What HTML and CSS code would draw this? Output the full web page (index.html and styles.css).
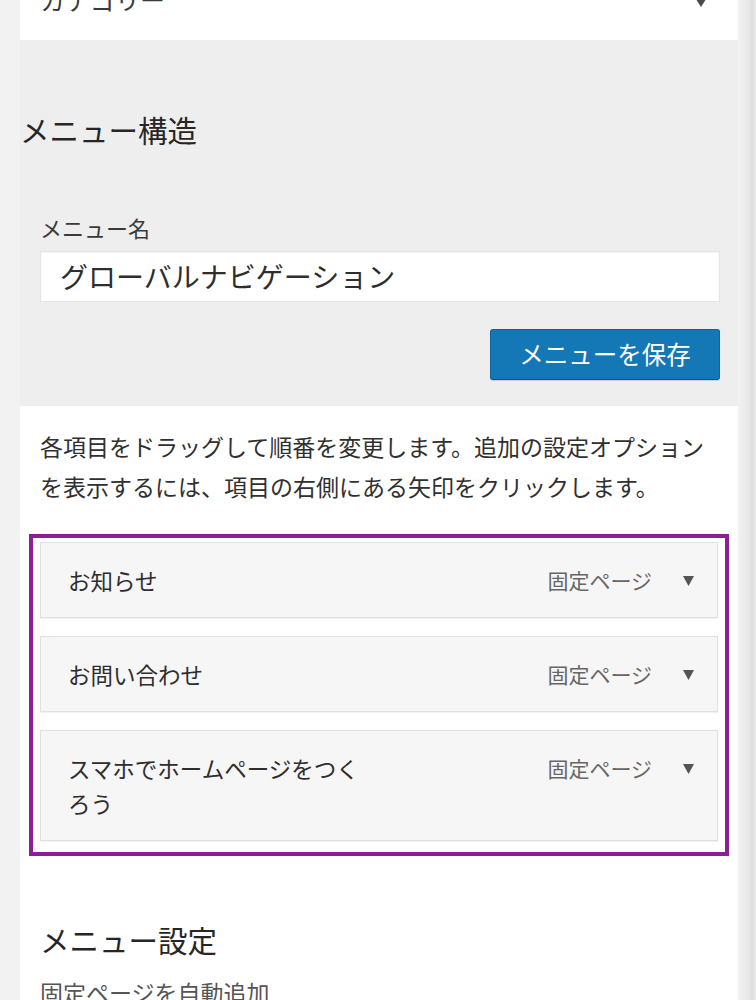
FILE: index.html
```html
<!DOCTYPE html>
<html lang="ja">
<head>
<meta charset="utf-8">
<title>メニュー構造</title>
<link rel="stylesheet" href="styles.css">
</head>
<body>
<div class="page">
  <div class="top-card">
    <span class="select-text">カテゴリー</span>
    <svg class="select-arrow" width="14" height="12" viewBox="0 0 14 12"><polygon points="0,0 14,0 7,11" fill="#4a4a4a"/></svg>
  </div>

  <div class="structure">
    <h2 class="section-title">メニュー構造</h2>
    <div class="name-block">
      <label class="name-label">メニュー名</label>
      <div class="name-input">グローバルナビゲーション</div>
      <div class="save-row">
        <button class="save-btn">メニューを保存</button>
      </div>
    </div>
  </div>

  <div class="panel">
    <p class="instructions">各項目をドラッグして順番を変更します。追加の設定オプションを表示するには、項目の右側にある矢印をクリックします。</p>

    <div class="highlight">
      <div class="item">
        <div class="item-title">お知らせ</div>
        <div class="item-controls"><span class="item-type">固定ページ</span><svg class="item-arrow" width="11" height="10" viewBox="0 0 11 10"><polygon points="0,0 11,0 5.5,10" fill="#555"/></svg></div>
      </div>
      <div class="item">
        <div class="item-title">お問い合わせ</div>
        <div class="item-controls"><span class="item-type">固定ページ</span><svg class="item-arrow" width="11" height="10" viewBox="0 0 11 10"><polygon points="0,0 11,0 5.5,10" fill="#555"/></svg></div>
      </div>
      <div class="item">
        <div class="item-title">スマホでホームページをつくろう</div>
        <div class="item-controls"><span class="item-type">固定ページ</span><svg class="item-arrow" width="11" height="10" viewBox="0 0 11 10"><polygon points="0,0 11,0 5.5,10" fill="#555"/></svg></div>
      </div>
    </div>

    <h2 class="settings-title">メニュー設定</h2>
    <div class="settings-label">固定ページを自動追加</div>
  </div>
</div>
</body>
</html>
```

FILE: styles.css
```css
html, body {
  margin: 0;
  padding: 0;
}
body {
  background: linear-gradient(to right, #f2f2f2 0, #f2f2f2 738px, #eeeeee 742px, #e8e8e8 749px, #dedede 752px, #eaeaea 756px);
  font-family: "Noto Sans CJK JP", "Noto Sans", sans-serif;
  color: #333;
  height: 1000px;
  overflow: hidden;
}
.page {
  margin: 0 18px 0 20px;
}
.top-card {
  background: #fff;
  height: 40px;
  padding: 0 30px 0 20px;
  display: flex;
  justify-content: space-between;
  align-items: flex-start;
}
.select-text {
  display: block;
  font-size: 25px;
  line-height: 25px;
  margin-top: -13px;
  color: #3a3a3a;
}
.select-arrow {
  display: block;
  margin-top: -4px;
}
.structure {
  background: #eeeeee;
  padding: 69px 0 26px;
}
.section-title {
  margin: 0;
  font-size: 29.5px;
  line-height: 41px;
  font-weight: 400;
  color: #262626;
}
.name-block {
  padding: 0 18px 0 20px;
  margin-top: 62px;
}
.name-label {
  display: block;
  font-size: 22px;
  line-height: 30px;
  color: #3a3a3a;
}
.name-input {
  margin-top: 9px;
  height: 49px;
  background: #fff;
  border: 1px solid #e4e4e4;
  box-shadow: inset 0 1px 2px rgba(0,0,0,0.06);
  padding-left: 19px;
  font-size: 28px;
  line-height: 49px;
  color: #2e2e2e;
}
.save-row {
  display: flex;
  justify-content: flex-end;
  margin-top: 27px;
}
.save-btn {
  width: 230px;
  height: 51px;
  background: #1478b6;
  border: 1px solid #0b669e;
  border-bottom-color: #09588a;
  border-radius: 3px;
  color: #fff;
  font-family: "Noto Sans CJK JP", "Noto Sans", sans-serif;
  font-size: 24.5px;
  line-height: 1;
  padding: 0;
  box-shadow: 0 1px 1px rgba(0,0,0,0.15);
}
.panel {
  background: #fff;
  padding: 20px 20px 0;
  height: 593px;
}
.instructions {
  margin: 0;
  font-size: 23px;
  line-height: 40px;
  color: #303030;
}
.highlight {
  margin: 28px -11px 0;
  border: 4px solid #8c1f93;
  padding: 4px 7px 11px;
  display: flex;
  flex-direction: column;
  gap: 18px;
}
.item {
  display: flex;
  align-items: flex-start;
  background: #f6f6f6;
  border: 1px solid #e0e0e0;
  box-shadow: 0 1px 1px rgba(0,0,0,0.05);
  padding: 20px 23px 19px 27px;
}
.item-title {
  width: 305px;
  font-size: 22.5px;
  line-height: 35px;
  color: #2e2e2e;
}
.item-controls {
  margin-left: auto;
  display: flex;
  align-items: center;
  height: 35px;
}
.item-type {
  font-size: 21px;
  line-height: 35px;
  color: #666;
}
.item-arrow {
  display: block;
  margin-left: 31px;
}
.settings-title {
  margin: 63px 0 0;
  font-size: 29.5px;
  line-height: 41px;
  font-weight: 400;
  color: #262626;
}
.settings-label {
  margin-top: 16px;
  font-size: 23px;
  line-height: 32px;
  color: #555;
}
```
